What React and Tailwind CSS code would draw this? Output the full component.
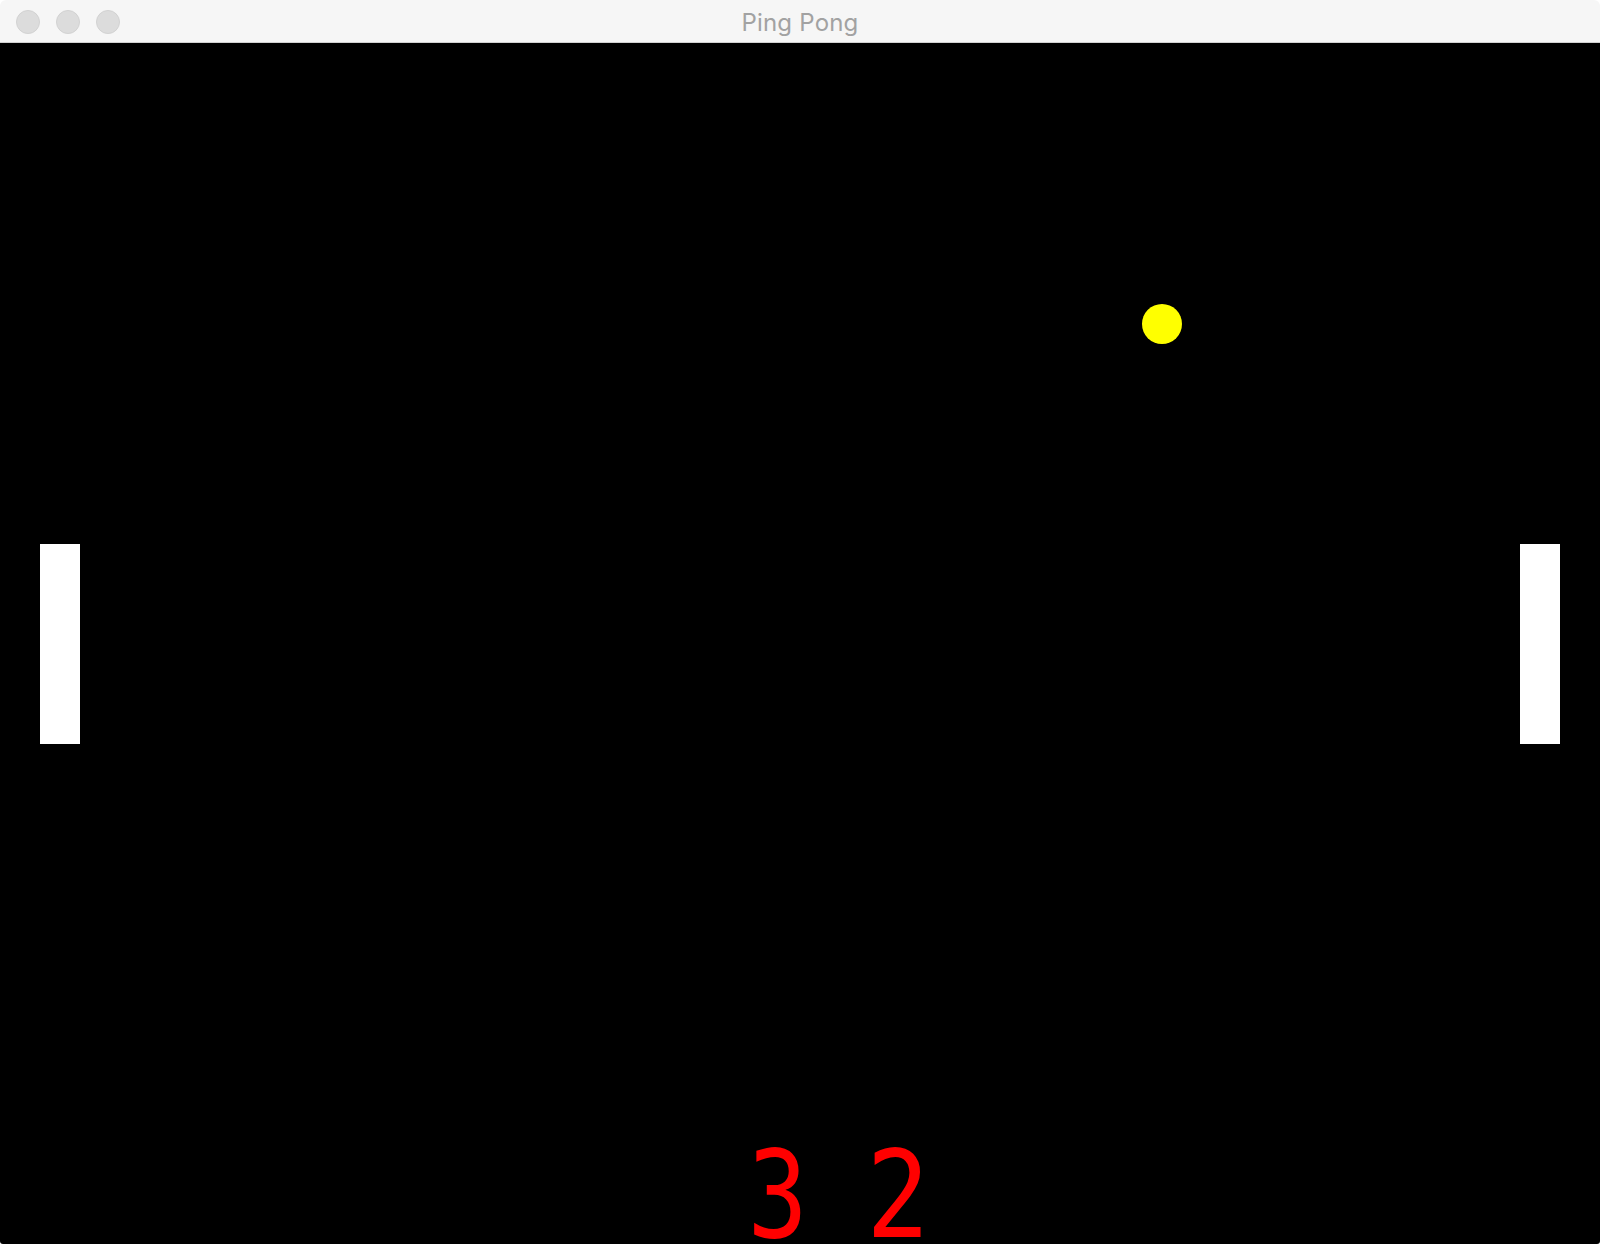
import React from 'react';

function TrafficLight() {
  return <div className="w-6 h-6 rounded-full bg-[#dcdcdc] border border-[#d2d2d2]" />;
}

export default function App() {
  const leftScore = 3;
  const rightScore = 2;

  return (
    <div className="w-[1600px] h-[1244px] bg-white overflow-hidden">
      <div className="w-full h-full flex flex-col rounded-t-[6px] rounded-b-[3px] overflow-hidden">
        {/* Title bar */}
        <div className="relative h-[43px] shrink-0 bg-[#f6f6f6] border-b border-[#d1d1d1] flex items-center px-4 pt-[2px] gap-4">
          <TrafficLight />
          <TrafficLight />
          <TrafficLight />
          <div className="absolute inset-0 flex items-center justify-center pt-[4px] pointer-events-none">
            <span className="text-[24px] text-[#a2a2a2] font-['Inter',sans-serif] tracking-[0.2px]">
              Ping Pong
            </span>
          </div>
        </div>

        {/* Game canvas */}
        <div className="relative flex-1 bg-black">
          {/* left paddle */}
          <div className="absolute left-[40px] top-[501px] w-[40px] h-[200px] bg-white" />
          {/* right paddle */}
          <div className="absolute left-[1520px] top-[501px] w-[40px] h-[200px] bg-white" />
          {/* ball */}
          <div className="absolute left-[1142px] top-[261px] w-[40px] h-[40px] rounded-full bg-[#ffff00]" />
          {/* score */}
          <div className="absolute left-[741px] top-[1104px] flex gap-[47px] text-[122px] leading-[96px] text-[#ff0000] font-['DejaVu_Sans_Mono',monospace]">
            <span className="inline-block scale-x-[0.82]">{leftScore}</span>
            <span className="inline-block scale-x-[0.86]">{rightScore}</span>
          </div>
        </div>
      </div>
    </div>
  );
}
